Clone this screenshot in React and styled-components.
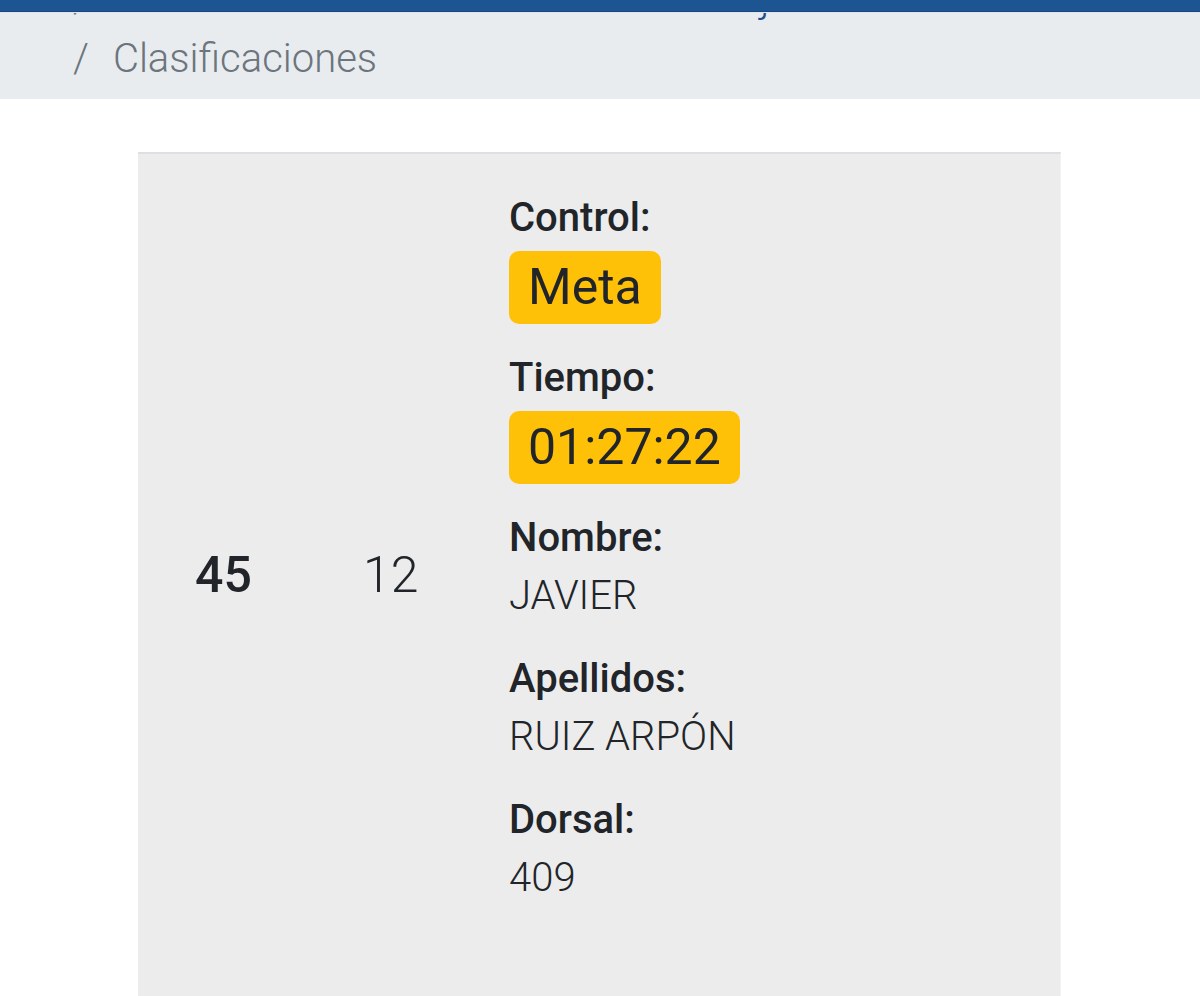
import React from "react";
import styled, { createGlobalStyle } from "styled-components";

const Global = createGlobalStyle`
  html, body { margin: 0; padding: 0; background: #ffffff; }
  body { font-family: Roboto, "Noto Sans", "Liberation Sans", sans-serif; color: #212529; }
  * { box-sizing: border-box; }
`;

const Page = styled.div`
  position: relative;
  height: 996px;
  overflow: hidden;
`;

const Navbar = styled.div`
  position: absolute;
  top: 0;
  left: 0;
  right: 0;
  height: 12px;
  background: #1d5592;
  border-bottom: 1px solid #17477d;
  box-shadow: 0 1px 0 #dce7f2;
  z-index: 2;
`;

const BreadcrumbBar = styled.nav`
  background: #e9ecef;
  height: 99px;
  overflow: hidden;
`;

const Crumbs = styled.ol`
  list-style: none;
  margin: -31px 0 0;
  padding: 0 0 0 73px;
  font-size: 40px;
  line-height: 60px;
`;

const Crumb = styled.li`
  display: flex;
  color: ${(p) => (p.$active ? "#6c757d" : "#1d4f8a")};
  font-weight: 300;
  white-space: nowrap;
`;

const Sep = styled.span`
  color: #6c757d;
  padding-right: 24px;
`;

const Card = styled.section`
  margin: 53px 0 0 138px;
  width: 923px;
  height: 844px;
  background: #ececec;
  border-top: 2px solid #dcdfe3;
  border-right: 1px solid #f2f2f2;
  display: flex;
  align-items: center;
  padding-left: 57px;
`;

const NumCell = styled.div`
  width: ${(p) => p.$w}px;
  flex: none;
  font-size: 50px;
  line-height: 60px;
  font-weight: ${(p) => p.$weight};
  color: #212529;
`;

const Info = styled.div`
  flex: 1;
  align-self: stretch;
  padding: 35px 0 0 2px;
  display: flex;
  flex-direction: column;
  gap: 25px;
`;

const Field = styled.div`
  display: flex;
  flex-direction: column;
  align-items: flex-start;
`;

const Label = styled.div`
  font-size: 40px;
  line-height: 58px;
  font-weight: 500;
  color: #212529;
`;

const Value = styled.div`
  font-size: 40px;
  line-height: 58px;
  font-weight: 300;
  color: #212529;
`;

const Badge = styled.span`
  margin-top: 4px;
  display: inline-block;
  background: #ffc107;
  color: #212529;
  border-radius: 10px;
  font-size: 50px;
  line-height: 73px;
  height: 73px;
  padding: 0 19px;
  font-weight: 400;
`;

const fields = [
  { label: "Control:", badge: "Meta" },
  { label: "Tiempo:", badge: "01:27:22" },
  { label: "Nombre:", value: "JAVIER" },
  { label: "Apellidos:", value: "RUIZ ARPÓN" },
  { label: "Dorsal:", value: "409" },
];

export default function App() {
  return (
    <>
      <Global />
      <Page>
        <Navbar />
        <BreadcrumbBar>
          <Crumbs>
            <Crumb>
              <Sep>/</Sep>
              Resultado Media Maratón Villa del Tajo
            </Crumb>
            <Crumb $active>
              <Sep>/</Sep>
              Clasificaciones
            </Crumb>
          </Crumbs>
        </BreadcrumbBar>
        <Card>
          <NumCell $w={168} $weight={500}>45</NumCell>
          <NumCell $w={144} $weight={300}>12</NumCell>
          <Info>
            {fields.map((f) => (
              <Field key={f.label}>
                <Label>{f.label}</Label>
                {f.badge ? <Badge>{f.badge}</Badge> : <Value>{f.value}</Value>}
              </Field>
            ))}
          </Info>
        </Card>
      </Page>
    </>
  );
}
